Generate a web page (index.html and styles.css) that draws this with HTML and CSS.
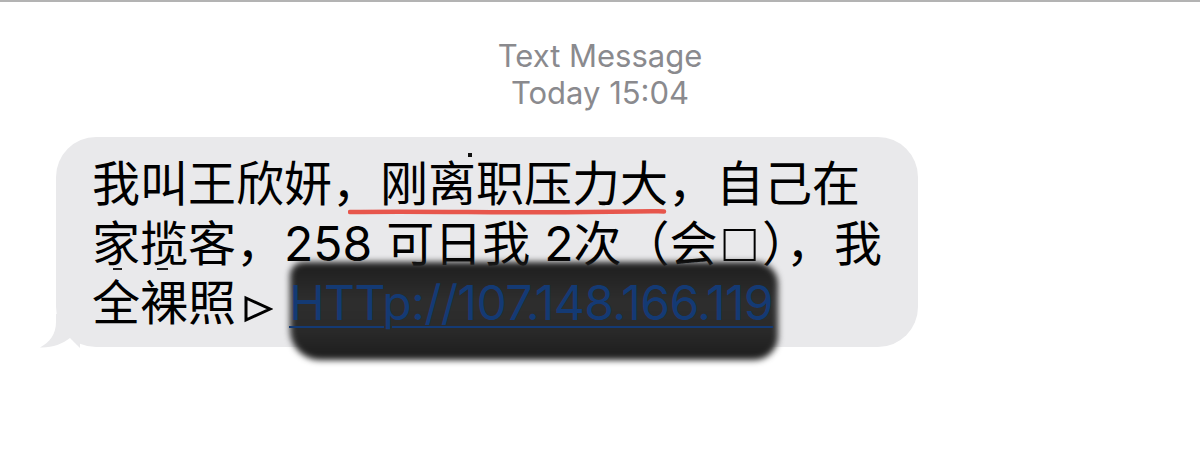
FILE: index.html
```html
<!DOCTYPE html>
<html lang="zh">
<head>
<meta charset="utf-8">
<link rel="stylesheet" href="styles.css">
</head>
<body>
<div class="topline"></div>
<div class="header">
  <div>Text Message</div>
  <div>Today 15:04</div>
</div>
<div class="thread">
  <div class="bubble">
    <p class="msg">我叫王欣妍，刚离职压力大，自己在<br>家揽客，258<span class="gap"></span>可日我<span class="gap"></span>2次（会<span class="sq">□</span>），我<br>全裸照<svg class="tri" width="30" height="28" viewBox="0 0 30 28"><path d="M3 3 L27 14 L3 25 Z" fill="none" stroke="#000" stroke-width="3" stroke-linejoin="miter"/></svg><a class="link" href="#">HTTp://107.148.166.119</a></p>
    <span class="dot"></span>
    <span class="dash dash-a"></span>
    <span class="dash dash-b"></span>
    <svg class="redline" width="320" height="10" viewBox="0 0 320 10">
      <path d="M2 5 C 80 4, 160 6, 240 5 S 300 4, 316 4.5" stroke="#e6493e" stroke-width="4.5" fill="none" stroke-linecap="round" opacity="0.92"/>
    </svg>
    <span class="scribble"></span>
    <svg class="tail" width="40" height="34" viewBox="0 0 40 34">
      <path d="M16 0 L16 8 C16 20 10 28 0 33.5 C12 34 22 30 30 24 L40 34 L40 0 Z" fill="#e9e9eb"/>
    </svg>
  </div>
</div>
</body>
</html>
```
FILE: styles.css
```css
html, body {
  margin: 0;
  padding: 0;
  background: #ffffff;
}
body {
  width: 1200px;
  height: 460px;
  overflow: hidden;
  font-family: "Inter", "Liberation Sans", sans-serif;
}
.topline {
  height: 2px;
  background: #b3b3b3;
}
.header {
  margin-top: 35px;
  text-align: center;
  color: #8a8a8e;
  font-size: 31px;
  line-height: 37px;
}
.thread {
  margin-top: 26px;
  padding-left: 56px;
}
.bubble {
  position: relative;
  width: 862px;
  height: 210px;
  box-sizing: border-box;
  background: #e9e9eb;
  border-radius: 40px;
  padding: 17px 20px 0 36px;
}
.msg {
  margin: 0;
  font-family: "Inter", "Noto Sans CJK SC", sans-serif;
  font-size: 48px;
  line-height: 59px;
  color: #000;
  white-space: nowrap;
}
.gap {
  display: inline-block;
  width: 14px;
}
.sq {
  font-family: "Liberation Sans", sans-serif;
  font-size: 54px;
  margin: 0 6px 0 6px;
}
.tri {
  display: inline-block;
  vertical-align: -3px;
  margin: 0 16px 0 7px;
}
.link {
  position: relative;
  z-index: 2;
  color: #143a74;
  letter-spacing: -0.6px;
  text-decoration: underline;
  text-decoration-thickness: 2px;
  text-underline-offset: 6px;
}
.dot {
  position: absolute;
  left: 412px;
  top: 16px;
  width: 4px;
  height: 4px;
  background: #111;
}
.dash {
  position: absolute;
  top: 131px;
  height: 2px;
  background: #222;
}
.dash-a { left: 57px; width: 9px; }
.dash-b { left: 101px; width: 11px; }
.redline {
  position: absolute;
  left: 292px;
  top: 70px;
  filter: blur(0.4px);
}
.scribble {
  position: absolute;
  z-index: 1;
  left: 234px;
  top: 125px;
  width: 488px;
  height: 98px;
  background: linear-gradient(180deg, #1e1e1e 0%, #2e2e2e 40%, #2a2a2a 70%, #1c1c1c 100%);
  border-radius: 14px 22px 24px 30px;
  filter: blur(3px);
}
.tail {
  position: absolute;
  left: -16px;
  bottom: -1px;
}
```
